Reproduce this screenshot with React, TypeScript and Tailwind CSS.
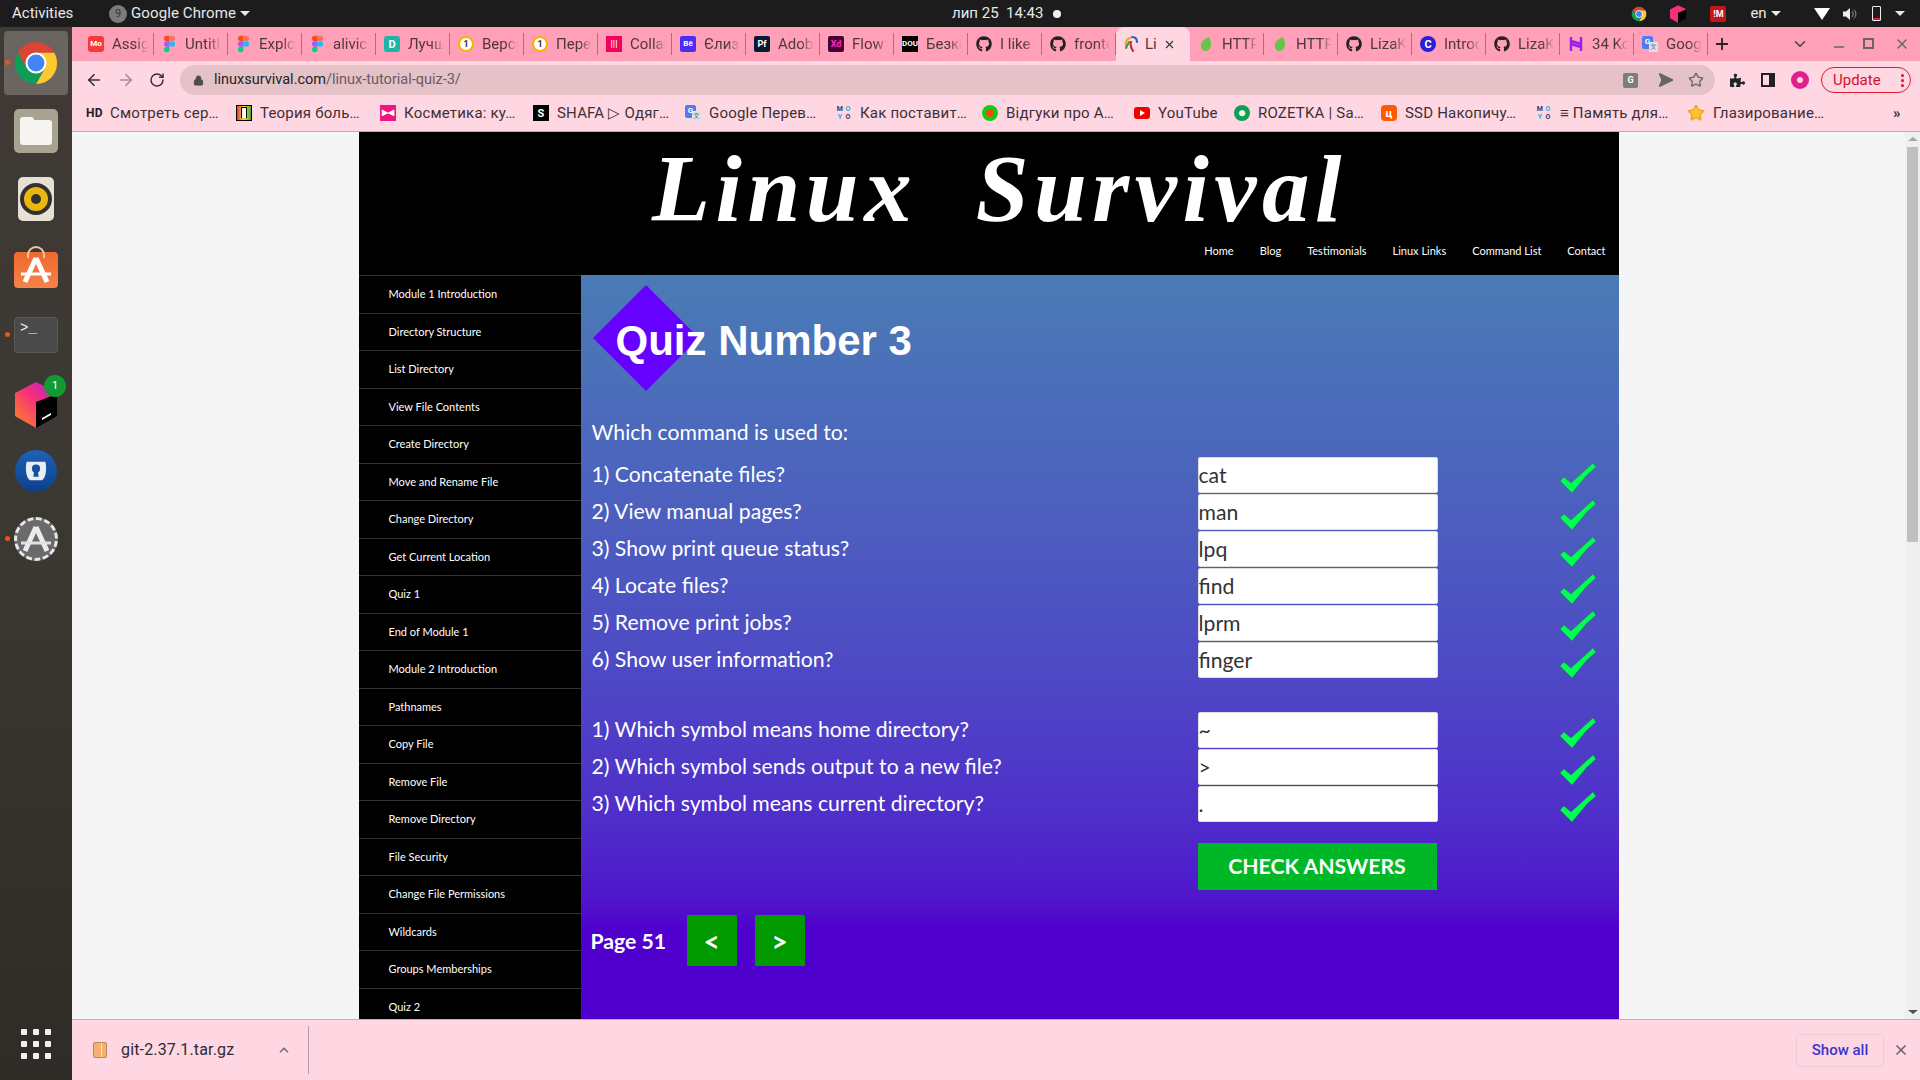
import { ArrowLeft, ArrowRight, ChevronDown, ChevronUp, Lock, Minus, Plus, RotateCw, Send, Star, X } from 'lucide-react';
import { FaGithub, FaPuzzlePiece } from 'react-icons/fa';

// --- DATA ---
const tabs = [
  { fav: 'mo', label: 'Assign' },
  { fav: 'figma', label: 'Untitled' },
  { fav: 'figma', label: 'Explore' },
  { fav: 'figma', label: 'alivic' },
  { fav: 'teal', label: 'Лучшие' },
  { fav: 'ring', label: 'Версия' },
  { fav: 'ring', label: 'Перевод' },
  { fav: 'colla', label: 'Collab' },
  { fav: 'be', label: 'Єлизавета' },
  { fav: 'pf', label: 'Adobe' },
  { fav: 'xd', label: 'Flow' },
  { fav: 'dou', label: 'Безкош' },
  { fav: 'github', label: 'I like' },
  { fav: 'github', label: 'frontend' },
  { fav: 'linux', label: 'Linux', active: true },
  { fav: 'leaf', label: 'HTTP' },
  { fav: 'leaf', label: 'HTTP' },
  { fav: 'github', label: 'LizaK' },
  { fav: 'c', label: 'Introd' },
  { fav: 'github', label: 'LizaK' },
  { fav: 'h', label: '34 Kool' },
  { fav: 'gt', label: 'Google' },
];

const bookmarks = [
  { fav: 'hd', label: 'Смотреть сер…', w: 'w-[150px]' },
  { fav: 'teoria', label: 'Теория боль…', w: 'w-[144px]' },
  { fav: 'kosm', label: 'Косметика: ку…', w: 'w-[153px]' },
  { fav: 'shafa', label: 'SHAFA ▷ Одяг…', w: 'w-[152px]' },
  { fav: 'gt', label: 'Google Перев…', w: 'w-[151px]' },
  { fav: 'moyo', label: 'Как поставит…', w: 'w-[146px]' },
  { fav: 'otz', label: 'Відгуки про А…', w: 'w-[152px]' },
  { fav: 'yt', label: 'YouTube', w: 'w-[100px]' },
  { fav: 'roz', label: 'ROZETKA | Sa…', w: 'w-[147px]' },
  { fav: 'ssd', label: 'SSD Накопичу…', w: 'w-[155px]' },
  { fav: 'moyo', label: '≡ Память для…', w: 'w-[151px]' },
  { fav: 'star', label: 'Глазирование…', w: 'w-[150px]' },
];

const sideLinks = [
  'Module 1 Introduction', 'Directory Structure', 'List Directory', 'View File Contents', 'Create Directory',
  'Move and Rename File', 'Change Directory', 'Get Current Location', 'Quiz 1', 'End of Module 1',
  'Module 2 Introduction', 'Pathnames', 'Copy File', 'Remove File', 'Remove Directory',
  'File Security', 'Change File Permissions', 'Wildcards', 'Groups Memberships', 'Quiz 2', 'End of Module 2',
];

const commands = [
  { q: '1) Concatenate files?', a: 'cat' },
  { q: '2) View manual pages?', a: 'man' },
  { q: '3) Show print queue status?', a: 'lpq' },
  { q: '4) Locate files?', a: 'find' },
  { q: '5) Remove print jobs?', a: 'lprm' },
  { q: '6) Show user information?', a: 'finger' },
];

const symbols = [
  { q: '1) Which symbol means home directory?', a: '~' },
  { q: '2) Which symbol sends output to a new file?', a: '>' },
  { q: '3) Which symbol means current directory?', a: '.' },
];

// --- ICONS ---
function ChromeIcon({ className }: { className: string }) {
  return (
    <svg viewBox="0 0 48 48" className={className}>
      <path d="M24 13H43A22 22 0 0 1 24 46L33 30Z" fill="#fdc92f" />
      <path d="M5 13A22 22 0 0 0 24 46L33 30H15Z" fill="#0f9d58" />
      <path d="M5 13A22 22 0 0 1 43 13H24L15 30Z" fill="#db4437" />
      <circle cx="24" cy="24" r="11" fill="#fff" />
      <circle cx="24" cy="24" r="8.8" fill="#4285f4" />
    </svg>
  );
}

function Fav({ kind }: { kind: string }) {
  const box = 'w-4 h-4 shrink-0 flex items-center justify-center text-[8px] font-bold font-[Roboto,sans-serif] leading-none';
  switch (kind) {
    case 'mo':
      return <div className={`${box} rounded-[3px] bg-[#f43b3b] text-white`}>Mo</div>;
    case 'figma':
      return (
        <svg viewBox="0 0 16 24" className="w-[11px] h-[18px] shrink-0 mx-[2px]">
          <circle cx="12" cy="12" r="4" fill="#19bcfe" />
          <path d="M8 0H4a4 4 0 0 0 0 8h4z" fill="#f24e1e" />
          <path d="M8 0h4a4 4 0 0 1 0 8H8z" fill="#ff7262" />
          <path d="M8 8H4a4 4 0 0 0 0 8h4z" fill="#a259ff" />
          <path d="M8 16H4a4 4 0 1 0 4 4z" fill="#0acf83" />
        </svg>
      );
    case 'teal':
      return <div className={`${box} rounded-[3px] bg-[#1fb5a6] text-white text-[11px]`}>D</div>;
    case 'ring':
      return <div className={`${box} rounded-full border-2 border-[#f7b500] bg-white text-[#333] text-[9px]`}>1</div>;
    case 'colla':
      return <div className={`${box} bg-[#f5005f] text-white text-[9px]`}>|||</div>;
    case 'be':
      return <div className={`${box} rounded-[2px] bg-[#4b2cf5] text-white`}>Bē</div>;
    case 'pf':
      return <div className={`${box} rounded-[2px] bg-[#071a33] text-white text-[9px]`}>Pf</div>;
    case 'xd':
      return <div className={`${box} rounded-[2px] bg-[#470137] text-[#ff2bc2] text-[9px]`}>Xd</div>;
    case 'dou':
      return <div className={`${box} bg-black text-white text-[6px]`}>DOU</div>;
    case 'github':
      return <FaGithub className="w-4 h-4 shrink-0 text-[#222]" />;
    case 'linux':
      return (
        <svg viewBox="0 0 16 16" className="w-4 h-4 shrink-0" fill="none" strokeWidth="2" strokeLinecap="round">
          <path d="M7 2C4 3 2 6 3 10" stroke="#e8a317" />
          <path d="M9 1c3 0 5 2 5 5" stroke="#2d5fb3" />
          <path d="M8 6c-1 3 0 6 2 9" stroke="#c9202c" />
          <path d="M6 6 3 12" stroke="#2f9e44" />
        </svg>
      );
    case 'leaf':
      return (
        <svg viewBox="0 0 16 16" className="w-4 h-4 shrink-0">
          <path d="M11 1C6 3 2 6 3 11c.4 3 3 4 5 4 4-1 5-4 5-7 0-3-1-5-2-7z" fill="#66c547" />
        </svg>
      );
    case 'c':
      return <div className={`${box} rounded-full bg-[#2a1fd6] text-white text-[11px]`}>C</div>;
    case 'h':
      return (
        <svg viewBox="0 0 16 16" className="w-4 h-4 shrink-0" fill="none" stroke="#9b1fe8" strokeWidth="2.4">
          <path d="M3 1v14M13 1v14M3 5l10 3M3 8l10 3" />
        </svg>
      );
    case 'gt':
      return (
        <div className="relative w-4 h-4 shrink-0">
          <div className="absolute left-0 top-0 w-[11px] h-[13px] rounded-[2px] bg-[#4f7df0] text-white text-[8px] font-bold text-center font-[Roboto,sans-serif]">G</div>
          <div className="absolute right-0 bottom-0 w-[9px] h-[10px] rounded-[1px] bg-[#dfe3ea] text-[#666] text-[7px] text-center">文</div>
        </div>
      );
    case 'hd':
      return <div className="w-[16px] shrink-0 text-[12px] font-bold text-[#222] font-[Roboto,sans-serif]">HD</div>;
    case 'teoria':
      return (
        <div className="w-4 h-4 shrink-0 bg-linear-to-r from-[#e33] via-[#fc3] to-[#3a3] border border-black flex justify-center">
          <div className="w-[6px] h-[11px] mt-px bg-white border border-black border-b-0" />
        </div>
      );
    case 'kosm':
      return <div className={`${box} bg-[#f0157f] text-white text-[8px]`}>▶◀</div>;
    case 'shafa':
      return <div className={`${box} bg-black text-white text-[11px]`}>S</div>;
    case 'moyo':
      return (
        <div className="w-4 h-4 shrink-0 grid grid-cols-2 text-[7px] font-bold leading-[8px] text-center font-[Roboto,sans-serif]">
          <span className="text-[#35356b]">M</span><span className="text-[#35a7e0]">O</span>
          <span className="text-[#35a7e0]">Y</span><span className="text-[#35356b]">O</span>
        </div>
      );
    case 'otz':
      return (
        <div className="w-4 h-4 shrink-0 rounded-full bg-[#0fd00f] flex items-center justify-center">
          <div className="w-2 h-2 rounded-full bg-[#f04a1a]" />
        </div>
      );
    case 'yt':
      return (
        <div className="w-4 h-[12px] shrink-0 rounded-[3px] bg-[#f00000] flex items-center justify-center">
          <div className="w-0 h-0 border-y-[3px] border-y-transparent border-l-[5px] border-l-white" />
        </div>
      );
    case 'roz':
      return <div className={`${box} rounded-full bg-[#0f9d58] text-white text-[10px]`}>☻</div>;
    case 'ssd':
      return <div className={`${box} rounded-[4px] bg-[#ff5a00] text-white text-[11px]`}>ц</div>;
    case 'star':
      return <Star className="w-[18px] h-[18px] shrink-0 fill-[#fbc531] text-[#f0a818]" />;
    default:
      return null;
  }
}

function CheckMark() {
  return (
    <svg viewBox="0 0 36 30" className="w-9 h-[30px] shrink-0">
      <path d="M0 18 4 14 11 20 33 0 36 4 27 12 12 30Z" fill="#00ff55" stroke="#1f8a4a" strokeWidth="0.7" />
    </svg>
  );
}

function DockDot() {
  return <div className="absolute left-[5px] top-[31px] w-[5px] h-[5px] rounded-full bg-[#e95420]" />;
}

function SoftwareA({ color, bar }: { color: string; bar: string }) {
  return (
    <svg viewBox="0 0 32 28" className="w-8 h-7">
      <path d="M16 2 5 26M16 2l11 24" stroke={color} strokeWidth="5" fill="none" />
      <path d="M1 18h30" stroke={bar} strokeWidth="3" />
    </svg>
  );
}

function Dock() {
  const slot = 'relative h-[68px] flex items-center justify-center';
  return (
    <div className="w-[72px] shrink-0 flex flex-col bg-linear-to-b from-[#3f3a36] via-[#3b3731] to-[#2f2c28] pt-[2px]">
      <div className={slot}>
        <DockDot />
        <div className="w-16 h-16 rounded-[4px] bg-[#6a6560] flex items-center justify-center">
          <ChromeIcon className="w-[46px] h-[46px]" />
        </div>
      </div>
      <div className={slot}>
        <div className="w-11 h-11 rounded-[5px] bg-[#a8a390] flex items-center justify-center">
          <div className="relative w-8 h-[25px] mt-[3px] rounded-[3px] bg-[#f6f5f1]">
            <div className="absolute -top-[3px] left-0 w-[14px] h-[6px] rounded-t-[3px] bg-[#f6f5f1]" />
          </div>
        </div>
      </div>
      <div className={slot}>
        <div className="w-9 h-11 rounded-[5px] bg-[#e6e1d4] flex items-center justify-center">
          <div className="w-8 h-8 rounded-full bg-[#e8b90c] border-[4px] border-[#33312f] flex items-center justify-center">
            <div className="w-[10px] h-[10px] rounded-full bg-[#33312f]" />
          </div>
        </div>
      </div>
      <div className={slot}>
        <div className="relative w-11 h-9 mt-[6px] rounded-[4px] bg-linear-to-b from-[#f0682b] to-[#f5834a] flex items-center justify-center">
          <div className="absolute -top-[6px] left-[13px] w-[18px] h-3 rounded-t-full border-2 border-b-0 border-[#e8c9a0]" />
          <SoftwareA color="#fff" bar="#fff" />
        </div>
      </div>
      <div className={slot}>
        <div className="w-11 h-9 rounded-[4px] bg-[#4a4a4a] border border-[#5a5a5a] pl-[5px] pt-[2px] text-[#eee] text-[14px] leading-[16px] font-['Liberation_Mono',monospace]">
          &gt;_
        </div>
        <DockDot />
      </div>
      <div className={slot}>
        <svg viewBox="0 0 42 46" className="w-[42px] h-[46px] mt-[4px]">
          <defs>
            <linearGradient id="jb" x1="0" y1="1" x2="1" y2="0">
              <stop offset="0" stopColor="#ff8a1f" />
              <stop offset="0.55" stopColor="#f5307a" />
              <stop offset="1" stopColor="#b21fd0" />
            </linearGradient>
          </defs>
          <path d="M21 0 42 10 21 24V46L0 34V11Z" fill="url(#jb)" />
          <path d="M21 20 42 12V34L21 46Z" fill="#000" />
          <path d="M27 36 36 31V33L27 38Z" fill="#fff" />
        </svg>
        <div className="absolute left-[44px] top-[6px] w-[22px] h-[22px] rounded-full bg-[#119c33] text-white text-[11px] text-center leading-[22px] font-[Roboto,sans-serif]">1</div>
      </div>
      <div className={slot}>
        <div className="w-[42px] h-[42px] rounded-full bg-linear-to-b from-[#1f62b8] to-[#0c3f8c] flex items-center justify-center">
          <svg viewBox="0 0 24 24" className="w-7 h-7">
            <path d="M4 4h16c1.500 6 .5 14-3 16H7C3.500 18 2.500 10 4 4z" fill="#e9eef5" />
            <circle cx="12" cy="10" r="3.500" fill="#154f9e" />
            <path d="M10.500 11h3l.8 6h-4.600z" fill="#154f9e" />
          </svg>
        </div>
      </div>
      <div className={slot}>
        <DockDot />
        <div className="w-[44px] h-[44px] rounded-full bg-[#6a6a6a] border-[3px] border-dashed border-[#e8e8e8] flex items-center justify-center">
          <SoftwareA color="#ececec" bar="#e8dcec" />
        </div>
      </div>
      <div className="mt-auto mb-[21px] mx-auto grid grid-cols-3 gap-[6px]">
        {Array.from({ length: 9 }).map((_, i) => (
          <div key={i} className="w-[6px] h-[6px] rounded-[1px] bg-[#f0f0f0]" />
        ))}
      </div>
    </div>
  );
}

function TopBar() {
  return (
    <div className="h-[27px] shrink-0 flex items-center bg-[#1c1c1c] text-[#e8e8e8] text-[15px] font-[Roboto,sans-serif]">
      <span className="ml-3 w-[97px]">Activities</span>
      <div className="w-[18px] h-[18px] rounded-full bg-[#7b7b7b] text-center text-[11px] leading-[18px] text-[#333]">9</div>
      <span className="ml-[4px] tracking-[0.1px]">Google Chrome</span>
      <div className="ml-[4px] w-0 h-0 border-x-[5px] border-x-transparent border-t-[5px] border-t-[#e8e8e8]" />
      <span className="ml-[702px] whitespace-pre">лип 25  14:43</span>
      <div className="ml-[10px] w-[8px] h-[8px] rounded-full bg-[#f0f0f0]" />
      <ChromeIcon className="ml-[570px] w-4 h-4" />
      <svg viewBox="0 0 42 46" className="ml-[23px] w-4 h-[18px]">
        <path d="M21 0 42 10 21 24V46L0 34V11Z" fill="#f5307a" />
        <path d="M21 20 42 12V34L21 46Z" fill="#000" />
      </svg>
      <div className="ml-[24px] w-4 h-4 rounded-[2px] bg-[#c4151c] text-white text-[9px] text-center leading-4 font-bold">!M</div>
      <span className="ml-[24px]">en</span>
      <div className="ml-[4px] w-0 h-0 border-x-[5px] border-x-transparent border-t-[5px] border-t-[#e8e8e8]" />
      <div className="ml-[33px] w-0 h-0 border-x-[8px] border-x-transparent border-t-[12px] border-t-white" />
      <svg viewBox="0 0 16 16" className="ml-[12px] w-4 h-4" fill="#eee">
        <path d="M1 5.500h3L8 2v12L4 10.500H1z" />
        <path d="M10 5c1.500 1.500 1.500 4.500 0 6M12 3.500c2.500 2.500 2.500 6.500 0 9" stroke="#999" fill="none" />
      </svg>
      <div className="ml-[14px] relative w-[9px] h-[15px] rounded-[1px] border border-[#eee]">
        <div className="absolute bottom-0 left-0 right-0 h-[2px] bg-[#e01b24]" />
      </div>
      <div className="ml-[14px] w-0 h-0 border-x-[5px] border-x-transparent border-t-[5px] border-t-[#e8e8e8]" />
    </div>
  );
}

function TabStrip() {
  return (
    <div className="h-[34px] shrink-0 flex items-center bg-[#ff9fb8] pl-2 font-[Roboto,sans-serif] text-[15px] text-[#4d3840]">
      {tabs.map((tab, i) =>
        tab.active ? (
          <div key={i} className="w-[74px] h-full flex items-center gap-[6px] pl-[7px] rounded-t-[8px] bg-[#ffd7e3]">
            <Fav kind={tab.fav} />
            <span className="w-[12px] overflow-hidden whitespace-nowrap">{tab.label}</span>
            <X className="w-[13px] h-[13px] text-[#333]" />
          </div>
        ) : (
          <div key={i} className="w-[74px] h-[22px] flex items-center gap-2 pl-2 border-r border-[#a8707f]">
            <Fav kind={tab.fav} />
            <span className="w-[36px] overflow-hidden whitespace-nowrap [mask-image:linear-gradient(to_right,black_65%,transparent)]">
              {tab.label}
            </span>
          </div>
        ),
      )}
      <Plus className="ml-[5px] w-[18px] h-[18px] text-[#222]" strokeWidth={2.4} />
      <ChevronDown className="ml-[60px] w-[18px] h-[18px] text-[#444]" />
      <Minus className="ml-[22px] w-4 h-4 mt-[6px] text-[#666]" />
      <div className="relative ml-[16px] w-[11px] h-[11px] border-2 border-[#666] mb-[2px]" />
      <X className="ml-[20px] w-4 h-4 text-[#666]" />
    </div>
  );
}

function Toolbar() {
  return (
    <div className="h-[36px] shrink-0 flex items-center pt-[2px] bg-[#ffd7e3] text-[#3a3a3a]">
      <ArrowLeft className="ml-[13px] w-[18px] h-[18px] text-[#333]" strokeWidth={2.2} />
      <ArrowRight className="ml-[14px] w-[18px] h-[18px] text-[#a58c94]" strokeWidth={2.2} />
      <RotateCw className="ml-[14px] w-4 h-4 text-[#333]" strokeWidth={2.2} />
      <div className="ml-[15px] w-[1535px] h-[30px] rounded-full bg-[#e5c1c8] flex items-center pl-[13px]">
        <Lock className="w-[11px] h-[11px] fill-[#4d4d4d] text-[#4d4d4d]" />
        <span className="ml-[10px] text-[14.5px] font-[Roboto,sans-serif] text-[#222]">
          linuxsurvival.com<span className="text-[#6b5a60]">/linux-tutorial-quiz-3/</span>
        </span>
        <div className="ml-auto flex items-center gap-[17px] pr-[11px] text-[#666]">
          <div className="w-[15px] h-[15px] rounded-[2px] bg-[#7d7d7d] text-white text-[9px] text-center leading-[15px] font-bold font-[Roboto,sans-serif]">G</div>
          <Send className="w-4 h-4 rotate-45 fill-[#666]" />
          <Star className="w-4 h-4" />
        </div>
      </div>
      <FaPuzzlePiece className="ml-[15px] w-[15px] h-[15px] text-[#222]" />
      <div className="ml-[16px] w-[14px] h-[14px] border-[2px] border-r-[6px] border-[#222]" />
      <div className="ml-[16px] w-[18px] h-[18px] rounded-full bg-[#e0218a] flex items-center justify-center">
        <div className="w-[6px] h-[6px] rounded-full bg-[#ffd7e3]" />
      </div>
      <div className="ml-[12px] w-[90px] h-[26px] rounded-full border border-[#e0182d] flex items-center justify-between pl-[11px] pr-[6px] text-[#d6102a] text-[15px] font-[Roboto,sans-serif]">
        Update
        <div className="flex flex-col gap-[2px]">
          <div className="w-[3px] h-[3px] rounded-full bg-[#d6102a]" />
          <div className="w-[3px] h-[3px] rounded-full bg-[#d6102a]" />
          <div className="w-[3px] h-[3px] rounded-full bg-[#d6102a]" />
        </div>
      </div>
    </div>
  );
}

function Bookmarks() {
  return (
    <div className="h-[35px] shrink-0 flex items-center pl-[14px] pb-[2px] bg-[#ffd7e3] border-b border-[#cfa8b4] font-[Roboto,sans-serif] text-[15px] tracking-[0.2px] text-[#3d3035]">
      {bookmarks.map((b, i) => (
        <div key={i} className={`${b.w} shrink-0 flex items-center gap-2 whitespace-nowrap`}>
          <Fav kind={b.fav} />
          <span>{b.label}</span>
        </div>
      ))}
      <span className="ml-[56px] text-[15px] font-bold text-[#333]">»</span>
    </div>
  );
}

function QuizRow({ q, a }: { q: string; a: string }) {
  return (
    <div className="h-[37px] flex items-center">
      <div className="w-[606px] shrink-0 pt-px text-[21.2px] text-white">{q}</div>
      <input
        readOnly
        value={a}
        className="w-[240px] h-[36px] shrink-0 bg-white border border-[#ddd] rounded-[2px] pl-0 text-[21.2px] text-[#333] outline-none"
      />
      <div className="ml-[122px] mt-[7px]">
        <CheckMark />
      </div>
    </div>
  );
}

function Site() {
  return (
    <div className="w-[1260px] mx-auto font-[Lato,sans-serif]">
      <header className="h-[143px] bg-black flex flex-col">
        <h1 className="h-[111px] pt-[8px] pl-[22px] text-center text-white text-[95px] leading-[98px] italic font-bold font-['Liberation_Serif',serif] tracking-[5.5px] whitespace-pre">
          Linux  Survival
        </h1>
        <nav className="flex justify-end gap-[26px] pr-[13px] text-[11px] leading-[16px] text-white">
          <span>Home</span>
          <span>Blog</span>
          <span>Testimonials</span>
          <span>Linux Links</span>
          <span>Command List</span>
          <span>Contact</span>
        </nav>
      </header>
      <div className="flex h-[744px] overflow-hidden">
        <aside className="w-[222px] shrink-0 bg-black">
          {sideLinks.map(link => (
            <div key={link} className="h-[37.5px] flex items-center pl-[30px] border-t border-[#333] text-[11px] text-white">
              {link}
            </div>
          ))}
        </aside>
        <main className="flex-1 px-[11px] bg-linear-to-b from-[#4a7bb5] to-[#5000cd] to-[88%]">
          <div className="relative h-[116px] pt-[10px]">
            <svg viewBox="0 0 106 106" className="absolute left-px top-[10px] w-[106px] h-[106px]">
              <path d="M53 0 106 53 53 106 0 53Z" fill="#6600ff" />
            </svg>
            <h2 className="relative pl-[24px] pt-[33px] text-[42px] leading-[46px] font-bold text-white font-['Liberation_Sans',sans-serif]">
              Quiz Number 3
            </h2>
          </div>
          <div className="h-[65px] flex items-center pt-[18px] text-[21.2px] text-white">Which command is used to:</div>
          {commands.map(row => (
            <QuizRow key={row.q} q={row.q} a={row.a} />
          ))}
          <div className="h-[33px]" />
          {symbols.map(row => (
            <QuizRow key={row.q} q={row.q} a={row.a} />
          ))}
          <button className="block ml-[606px] mt-[21px] w-[239px] h-[47px] bg-[#00b827] text-white text-[21.2px] font-bold">
            CHECK ANSWERS
          </button>
          <div className="flex items-center mt-[25px]">
            <span className="-ml-px w-[96px] pt-[2px] text-[21.2px] font-bold text-white">Page 51</span>
            <button className="w-[50px] h-[51px] bg-[#009900] text-white text-[28px] font-bold">&lt;</button>
            <button className="ml-[18px] w-[50px] h-[51px] bg-[#009900] text-white text-[28px] font-bold">&gt;</button>
          </div>
        </main>
      </div>
    </div>
  );
}

function Scrollbar() {
  return (
    <div className="w-[15px] shrink-0 bg-[#efefef] flex flex-col items-center">
      <div className="mt-[5px] w-0 h-0 border-x-[5px] border-x-transparent border-b-[4px] border-b-[#a5a5a5]" />
      <div className="mt-[6px] w-[11px] h-[395px] bg-[#c0c0c0]" />
      <div className="mt-auto mb-[5px] w-0 h-0 border-x-[5px] border-x-transparent border-t-[4px] border-t-[#505050]" />
    </div>
  );
}

function DownloadBar() {
  return (
    <div className="h-[61px] shrink-0 flex items-center bg-[#ffd7e3] border-t border-[#cfa8b4] font-[Roboto,sans-serif]">
      <div className="ml-[21px] relative w-[14px] h-4 rounded-[2px] bg-[#f5b06e] border border-[#b8895f]">
        <div className="absolute left-[7px] top-0 bottom-0 w-px bg-[#fde0bd]" />
      </div>
      <span className="ml-[14px] w-[156px] text-[16px] tracking-[0.15px] text-[#2f2a35]">git-2.37.1.tar.gz</span>
      <ChevronUp className="w-[14px] h-[14px] text-[#777]" strokeWidth={3} />
      <div className="ml-[17px] h-12 w-px bg-[#b79aa4]" />
      <button className="ml-auto w-[88px] h-[33px] rounded-[3px] border border-[#f0cbd6] text-[15px] font-medium text-[#3a35cc]">Show all</button>
      <X className="ml-[9px] mr-[11px] w-4 h-4 text-[#666]" strokeWidth={2.5} />
    </div>
  );
}

export default function App() {
  return (
    <div className="w-[1920px] h-[1080px] flex flex-col overflow-hidden">
      <TopBar />
      <div className="flex-1 flex min-h-0">
        <Dock />
        <div className="flex-1 flex flex-col min-w-0">
          <TabStrip />
          <Toolbar />
          <Bookmarks />
          <div className="flex-1 flex min-h-0 bg-[#f5f5f5] overflow-hidden">
            <div className="flex-1 min-w-0">
              <Site />
            </div>
            <Scrollbar />
          </div>
          <DownloadBar />
        </div>
      </div>
    </div>
  );
}
